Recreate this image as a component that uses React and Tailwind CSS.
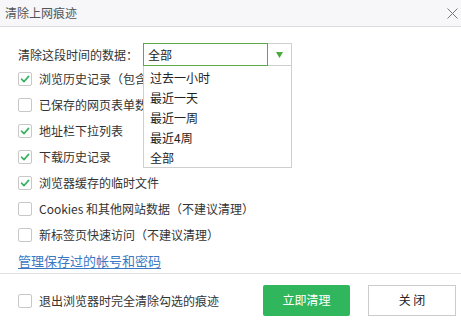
import React from "react";

const font = { fontFamily: '"Noto Sans CJK SC", "Microsoft YaHei", sans-serif' };

function Box({ checked }) {
  return (
    <span className="w-[14px] h-[14px] shrink-0 rounded-[2px] border border-[#c8c8c8] bg-white flex items-center justify-center">
      {checked && (
        <svg width="10" height="10" viewBox="0 0 10 10">
          <path d="M1.5 5.2 L4 7.6 L8.6 2.4" fill="none" stroke="#36b25f" strokeWidth="1.6" strokeLinecap="round" strokeLinejoin="round" />
        </svg>
      )}
    </span>
  );
}

function Row({ checked, clip, children }) {
  return (
    <div className="h-[26px] flex items-center gap-[7px]">
      <Box checked={checked} />
      <span className={(clip ? "w-[104px] overflow-hidden " : "") + "text-[12px] leading-[14px] text-[#333] whitespace-nowrap"}>{children}</span>
    </div>
  );
}

export default function App() {
  const items = ["过去一小时", "最近一天", "最近一周", "最近4周", "全部"];
  return (
    <div className="relative w-[461px] h-[323px] bg-white overflow-hidden" style={font}>
      <div className="h-[27px] bg-[#f7f6f9] border-b border-[#dcdcdc] flex items-center justify-between pl-[5px] pr-[3px]">
        <span className="text-[12px] leading-[14px] text-[#555]">清除上网痕迹</span>
        <svg width="11" height="11" viewBox="0 0 11 11">
          <path d="M0.5 0.5 L10.5 10.5 M10.5 0.5 L0.5 10.5" stroke="#777" strokeWidth="1" />
        </svg>
      </div>

      <div className="pl-[18px] pt-[16px]">
        <div className="flex items-center h-[23px]">
          <span className="w-[125px] text-[12px] leading-[14px] text-[#333]">清除这段时间的数据：</span>
          <div className="flex h-[23px] w-[149px]">
            <div className="flex-1 border border-[#5aaa4a] flex items-center pl-[4px] text-[12px] leading-[14px] text-[#222]">全部</div>
            <div className="w-[24px] border border-l-0 border-[#cfcfcf] flex items-center justify-center">
              <svg width="7" height="6" viewBox="0 0 7 6"><path d="M0 0 H7 L3.5 6 Z" fill="#4caa3c" /></svg>
            </div>
          </div>
        </div>

        <div>
          <Row checked clip>浏览历史记录（包含</Row>
          <Row clip>已保存的网页表单数</Row>
          <Row checked>地址栏下拉列表</Row>
          <Row checked>下载历史记录</Row>
          <Row checked>浏览器缓存的临时文件</Row>
          <Row>Cookies 和其他网站数据（不建议清理）</Row>
          <Row>新标签页快速访问（不建议清理）</Row>
          <div className="h-[24px] flex items-center">
            <span className="text-[13px] leading-[15px] text-[#3b78c3] underline underline-offset-2">管理保存过的帐号和密码</span>
          </div>
        </div>
      </div>

      <div className="absolute left-[143px] top-[66px] w-[149px] h-[102px] bg-white border border-t-0 border-[#cfcfcf] pt-[2px]">
        {items.map((t) => (
          <div key={t} className="h-[20px] flex items-center pl-[6px] text-[12px] leading-[14px] text-[#222]">{t}</div>
        ))}
      </div>

      <div className="border-t border-[#e2e2e2] mt-[1px] h-[50px] flex items-center justify-between pl-[18px] pr-[5px]">
        <div className="flex items-center gap-[7px] mt-[4px]">
          <Box />
          <span className="text-[12px] leading-[14px] text-[#333]">退出浏览器时完全清除勾选的痕迹</span>
        </div>
        <div className="flex items-center gap-[18px] mt-[3px]">
          <div className="w-[87px] h-[31px] rounded-[2px] bg-[#30b65d] flex items-center justify-center text-[12px] text-white">立即清理</div>
          <div className="w-[88px] h-[31px] border border-[#cbcbcb] bg-white flex items-center justify-center text-[12px] text-[#222]">关 闭</div>
        </div>
      </div>
    </div>
  );
}
